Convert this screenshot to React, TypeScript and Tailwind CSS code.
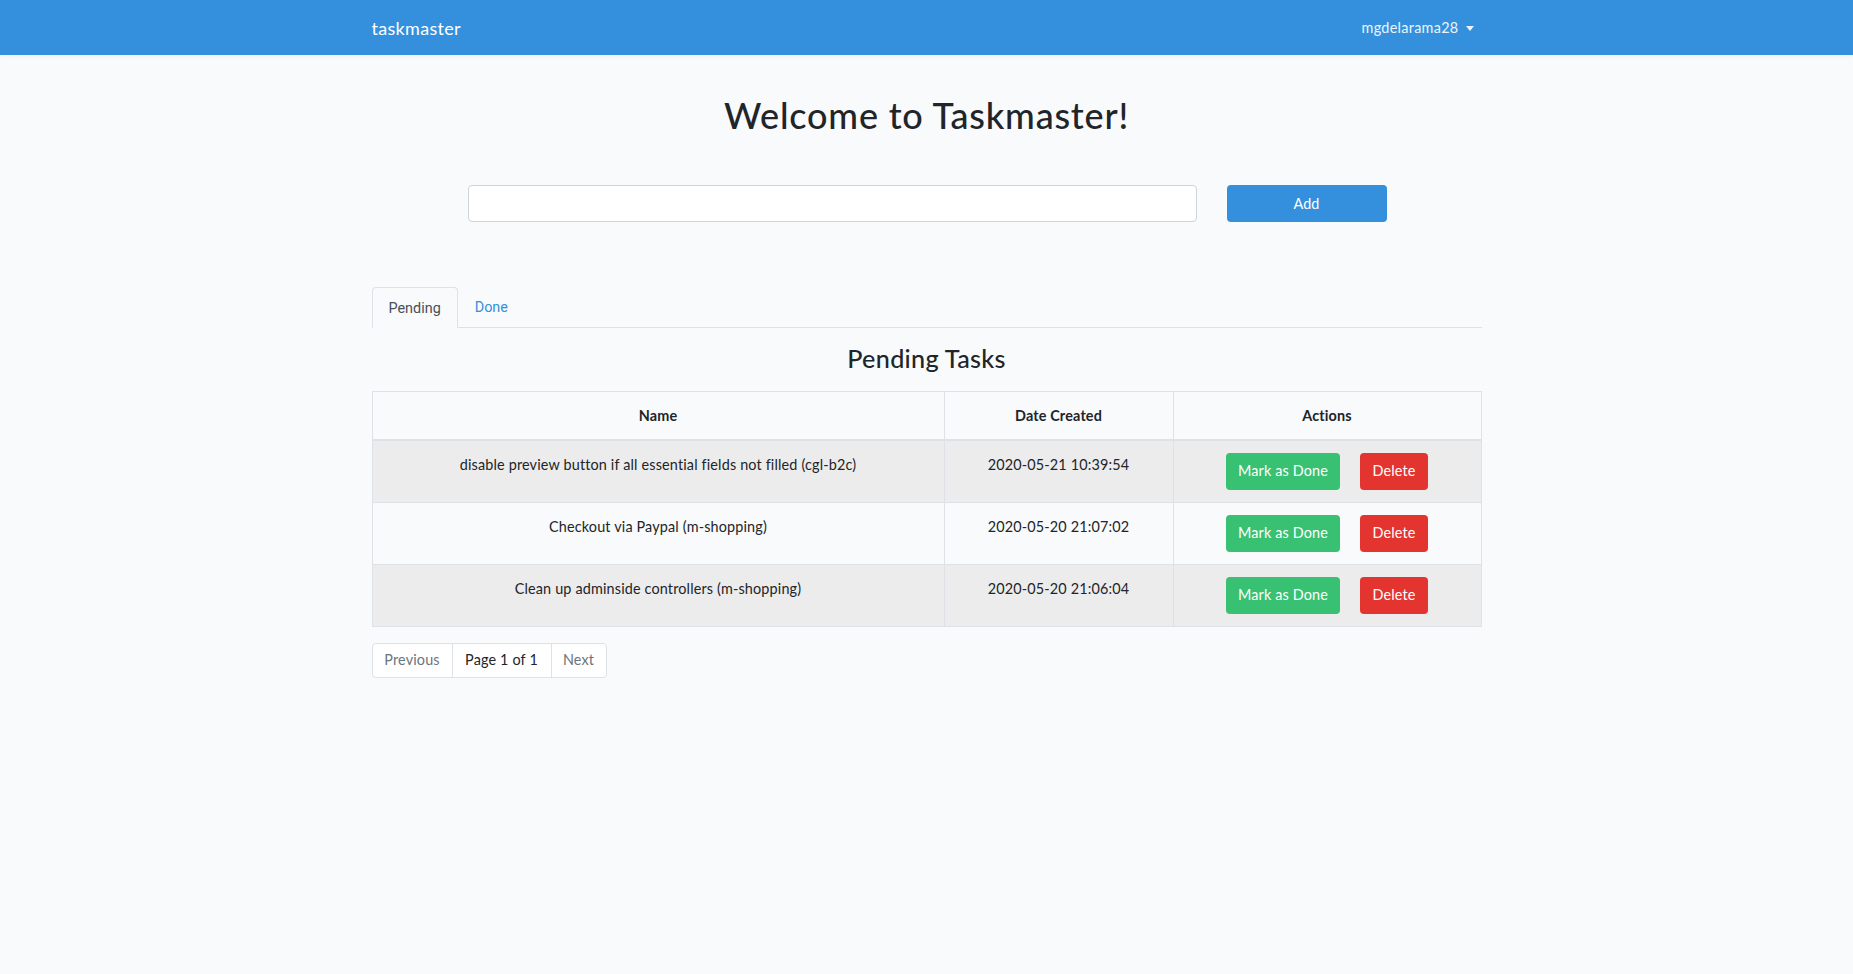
import React from "react";

const tasks = [
  { name: "disable preview button if all essential fields not filled (cgl-b2c)", date: "2020-05-21 10:39:54" },
  { name: "Checkout via Paypal (m-shopping)", date: "2020-05-20 21:07:02" },
  { name: "Clean up adminside controllers (m-shopping)", date: "2020-05-20 21:06:04" },
];

export default function App() {
  return (
    <div className="min-h-screen bg-[#f8fafc] text-[#212529] font-['Lato','Open_Sans',sans-serif] text-[14.4px] leading-[1.6] tracking-[0.16px]">
      <nav className="h-[55px] bg-[#3490dc] shadow-[0_2px_4px_rgba(0,0,0,0.04)]">
        <div className="mx-auto flex h-full w-[1140px] items-center justify-between px-[15px]">
          <span className="text-[18px] leading-none text-white tracking-[0.3px]">taskmaster</span>
          <span className="mt-[2px] flex items-center px-2 leading-none text-white/90 tracking-[0.3px]">
            mgdelarama28
            <span className="ml-[7px] h-0 w-0 border-x-[4px] border-t-[5px] border-x-transparent border-t-white/90" />
          </span>
        </div>
      </nav>

      <main className="mx-auto w-[1140px] px-[15px]">
        <h1 className="mt-[39px] text-center text-[36px] font-medium leading-[1.2] tracking-[0.8px]">Welcome to Taskmaster!</h1>

        <div className="mt-[48px] flex gap-[30px] pl-[96px]">
          <input
            type="text"
            className="h-[37px] w-[729px] rounded-[4px] border border-[#ced4da] bg-white px-3 outline-none"
          />
          <button className="h-[37px] w-[160px] rounded-[4px] bg-[#3490dc] text-white">Add</button>
        </div>

        <div className="mt-[65px] flex border-b border-[#dee2e6] tracking-normal">
          <div className="-mb-px rounded-t-[4px] border border-[#dee2e6] border-b-[#f8fafc] bg-[#f8fafc] px-4 pt-[9px] pb-[7px] font-['Roboto',sans-serif] text-[#495057]">
            Pending
          </div>
          <div className="px-4 pt-[9px] pb-[7px] pl-[17px] font-['Roboto',sans-serif] text-[#3490dc]">Done</div>
        </div>

        <h3 className="mt-[15px] text-center text-[25.2px] font-medium leading-[1.2] tracking-[0.3px]">Pending Tasks</h3>

        <table className="mt-[18px] w-full table-fixed border-collapse border border-[#dee2e6] text-center">
          <thead>
            <tr>
              <th className="w-[572px] border border-b-2 border-[#dee2e6] px-3 pt-3 pb-[11px] font-bold">Name</th>
              <th className="w-[229px] border border-b-2 border-[#dee2e6] px-3 pt-3 pb-[11px] font-bold">Date Created</th>
              <th className="border border-b-2 border-[#dee2e6] px-3 pt-3 pb-[11px] font-bold">Actions</th>
            </tr>
          </thead>
          <tbody>
            {tasks.map((t, i) => (
              <tr key={i} className={i % 2 === 0 ? "bg-[#ececed]" : ""}>
                <td className="border border-[#dee2e6] p-3 align-top">{t.name}</td>
                <td className="border border-[#dee2e6] p-3 align-top">{t.date}</td>
                <td className="border border-[#dee2e6] p-3 align-top">
                  <div className="flex justify-center gap-5">
                    <button className="h-[37px] w-[114px] rounded-[4px] bg-[#38c172] text-white">Mark as Done</button>
                    <button className="h-[37px] w-[68px] rounded-[4px] bg-[#e3342f] text-white">Delete</button>
                  </div>
                </td>
              </tr>
            ))}
          </tbody>
        </table>

        <div className="mt-[16px] inline-flex h-[35px] overflow-hidden rounded-[4px] border border-[#dee2e6] bg-white leading-[1.25]">
          <span className="flex w-[79px] items-center justify-center text-[#6c757d]">Previous</span>
          <span className="flex w-[99px] items-center justify-center border-l border-[#dee2e6]">Page 1 of 1</span>
          <span className="flex w-[55px] items-center justify-center border-l border-[#dee2e6] text-[#6c757d]">Next</span>
        </div>
      </main>
    </div>
  );
}
